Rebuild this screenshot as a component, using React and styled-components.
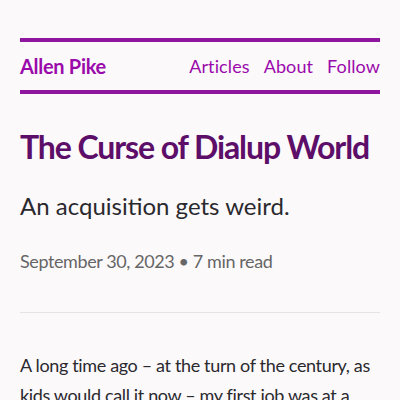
import styled, { createGlobalStyle } from 'styled-components'

const Global = createGlobalStyle`
    html, body {
        margin: 0;
        padding: 0;
        background: #fcf9fb;
    }
    body {
        font-family: Lato, "Noto Sans", sans-serif;
    }
`;

const Page = styled.div`
    padding: 38px 20px 0;
`;

const Header = styled.header`
    border-top: 4px solid #8f179f;
    border-bottom: 4px solid #8f179f;
    height: 48px;
    display: flex;
    align-items: center;
    justify-content: space-between;
`;

const Brand = styled.a`
    font-weight: 700;
    font-size: 20px;
    color: #9a0aab;
    text-decoration: none;
    letter-spacing: -0.3px;
`;

const Nav = styled.nav`
    display: flex;
    gap: 14px;
`;

const NavLink = styled.a`
    font-size: 18px;
    color: #9a0aab;
    text-decoration: none;
    letter-spacing: 0.1px;
`;

const Title = styled.h1`
    margin: 34px 0 0;
    font-size: 32px;
    line-height: 38px;
    font-weight: 700;
    color: #5c0e68;
    letter-spacing: -1.1px;
    white-space: nowrap;
`;

const Subtitle = styled.p`
    margin: 25px 0 0;
    font-size: 24px;
    line-height: 30px;
    color: #2a2a2e;
`;

const Meta = styled.p`
    margin: 28px 0 0;
    font-size: 18px;
    line-height: 24px;
    color: #666;
    letter-spacing: -0.4px;
`;

const Rule = styled.hr`
    margin: 39px 0 0;
    border: 0;
    border-top: 1px solid #e6e2e5;
`;

const Body = styled.p`
    margin: 37px 0 0;
    font-size: 18px;
    line-height: 30px;
    color: #2a2a2e;
    letter-spacing: -0.35px;
`;

export default function App() {
    return (
        <Page>
            <Global />
            <Header>
                <Brand href="#">Allen Pike</Brand>
                <Nav>
                    <NavLink href="#">Articles</NavLink>
                    <NavLink href="#">About</NavLink>
                    <NavLink href="#">Follow</NavLink>
                </Nav>
            </Header>
            <Title>The Curse of Dialup World</Title>
            <Subtitle>An acquisition gets weird.</Subtitle>
            <Meta>September 30, 2023 • 7 min read</Meta>
            <Rule />
            <Body>
                A long time ago – at the turn of the century, as kids would call it now – my first job was at a
                small web company.
            </Body>
        </Page>
    );
}
